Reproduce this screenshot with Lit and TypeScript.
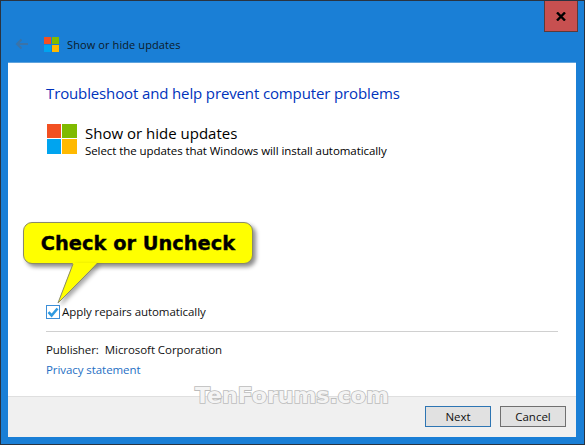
import { LitElement, html, css } from "lit";
import { customElement } from "lit/decorators.js";

const logo = (s: number) => html`<svg width=${s} height=${s} viewBox="0 0 32 32" shape-rendering="crispEdges">
  <rect x="0" y="0" width="15" height="15" fill="#f25022"></rect>
  <rect x="16" y="0" width="16" height="15" fill="#7fba00"></rect>
  <rect x="0" y="16" width="15" height="16" fill="#00a4ef"></rect>
  <rect x="16" y="16" width="16" height="16" fill="#ffb900"></rect>
</svg>`;

@customElement("app-root")
export class AppRoot extends LitElement {
  static styles = css`
    :host { display: block; width: 585px; height: 445px; font-family: "Open Sans", "Noto Sans", sans-serif; }
    .window { position: relative; box-sizing: border-box; width: 585px; height: 445px; background: #1a7fd6;
      border: 1px solid #2a3340; display: flex; flex-direction: column; overflow: hidden; }
    .chrome { height: 61px; flex: none; display: flex; align-items: flex-end; position: relative; }
    .close { position: absolute; right: 6px; top: 0; box-sizing: border-box; width: 34px; height: 31px; background: #c75050;
      border: 1px solid #5a3a3a; border-top: none; display: flex; align-items: center; justify-content: center; }
    .nav { display: flex; align-items: center; height: 20px; margin: 0 0 8px 14px; }
    .nav .logo { display: flex; margin: 0 8px 0 15px; }
    .title { font-size: 11px; color: #0c1a28; letter-spacing: 0.1px; }
    .client { flex: 1; margin: 0 8px 7px 7px; background: #fff; display: flex; flex-direction: column; min-height: 0;
      border-top: 1px solid #5fa3dd; }
    .content { flex: 1; padding: 20px 18px 0 38px; display: flex; flex-direction: column; min-height: 0; }
    h1 { margin: 0; font-size: 15px; font-weight: 400; color: #0033bc; line-height: 20px; letter-spacing: -0.13px; }
    .task { display: flex; align-items: flex-start; margin-top: 20px; gap: 8px; }
    .task .logo { display: flex; margin: 1px 0 0 1px; }
    .task-title { font-size: 15px; line-height: 20px; color: #000; letter-spacing: 0; }
    .task-sub { font-size: 11.5px; line-height: 15px; color: #000; letter-spacing: -0.07px; }
    .spacer { flex: 1; }
    .check { display: flex; align-items: center; gap: 2px; font-size: 11.5px; letter-spacing: -0.07px; color: #111; line-height: 16px; }
    .box { display: block; box-sizing: border-box; width: 14px; height: 14px; }
    hr { border: none; height: 1px; background: #d0d0d0; margin: 11px 0 0; }
    .pub { margin-top: 10px; font-size: 11.5px; letter-spacing: -0.07px; line-height: 16px; color: #111; display: flex; gap: 6px; }
    .link { margin-top: 4px; font-size: 11.5px; letter-spacing: -0.07px; line-height: 16px; color: #1f6fc4; margin-bottom: 18px; }
    .footer { flex: none; box-sizing: border-box; height: 41px; background: #f0f0f0; border-top: 1px solid #dfdfdf; display: flex;
      justify-content: flex-end; align-items: center; gap: 9px; padding: 0 10px 2px 0; }
    .btn { box-sizing: border-box; width: 66px; height: 21px; background: #e1e1e1; border: 1px solid #adadad; font-size: 11.5px;
      display: flex; align-items: center; justify-content: center; color: #111; }
    .btn.next { border-color: #2d75b3; }
    .btn.cancel { border-color: #707070; }
    .callout { position: absolute; left: 22px; top: 221px; width: 230px; height: 42px; box-sizing: border-box; background: #ffff00;
      border: 1px solid #8a8a6a; border-radius: 9px; box-shadow: 3px 3px 4px rgba(0,0,0,.45);
      display: flex; align-items: center; justify-content: center; font-family: "DejaVu Sans", sans-serif;
      font-weight: 700; font-size: 19.4px; color: #000; -webkit-text-stroke: 0.35px #000; }
    .tail { position: absolute; left: 50px; top: 258px; overflow: visible; filter: drop-shadow(3px 2px 2px rgba(0,0,0,.35)); }
    .mark { position: absolute; left: 194px; top: 381px; font-family: "DejaVu Sans", sans-serif; font-weight: 700;
      font-size: 22px; color: #f4f4f4; -webkit-text-stroke: 1.7px #bcbcbc; paint-order: stroke fill; line-height: 28px; }
  `;

  render() {
    return html`<div class="window">
      <div class="chrome">
        <div class="close">
          <svg width="10" height="9" viewBox="0 0 10 9"><path d="M1 0.5 L9 8.5 M9 0.5 L1 8.5" stroke="#000" stroke-width="2.4"></path></svg>
        </div>
        <div class="nav">
          <svg width="14" height="12" viewBox="0 0 14 12"><path d="M13 6H2M6.5 1.5 2 6l4.5 4.5" fill="none" stroke="#3a73a8" stroke-width="2"></path></svg>
          <span class="logo">${logo(15)}</span>
          <span class="title">Show or hide updates</span>
        </div>
      </div>
      <div class="client">
        <div class="content">
          <h1>Troubleshoot and help prevent computer problems</h1>
          <div class="task">
            <span class="logo">${logo(30)}</span>
            <div>
              <div class="task-title">Show or hide updates</div>
              <div class="task-sub">Select the updates that Windows will install automatically</div>
            </div>
          </div>
          <div class="spacer"></div>
          <div class="check">
            <svg class="box" viewBox="0 0 14 14"><rect x="0.5" y="0.5" width="13" height="13" fill="#fff" stroke="#3c8fd8"></rect><path d="M2.5 7.2 5.6 10.5 11.5 3.5" fill="none" stroke="#2f9ae0" stroke-width="2.6"></path></svg>
            <span>Apply repairs automatically</span>
          </div>
          <hr />
          <div class="pub"><span>Publisher:</span><span>Microsoft Corporation</span></div>
          <div class="link">Privacy statement</div>
        </div>
        <div class="footer">
          <div class="btn next">Next</div>
          <div class="btn cancel">Cancel</div>
        </div>
      </div>
      <div class="callout">Check or Uncheck</div>
      <svg class="tail" width="60" height="50" viewBox="0 0 60 50"><path d="M22 4 L7 44 L46 4 Z" fill="#ffff00"></path><path d="M22 5 L7 44 L46 5" fill="none" stroke="#8a8a6a"></path></svg>
      <div class="mark">TenForums.com</div>
    </div>`;
  }
}
